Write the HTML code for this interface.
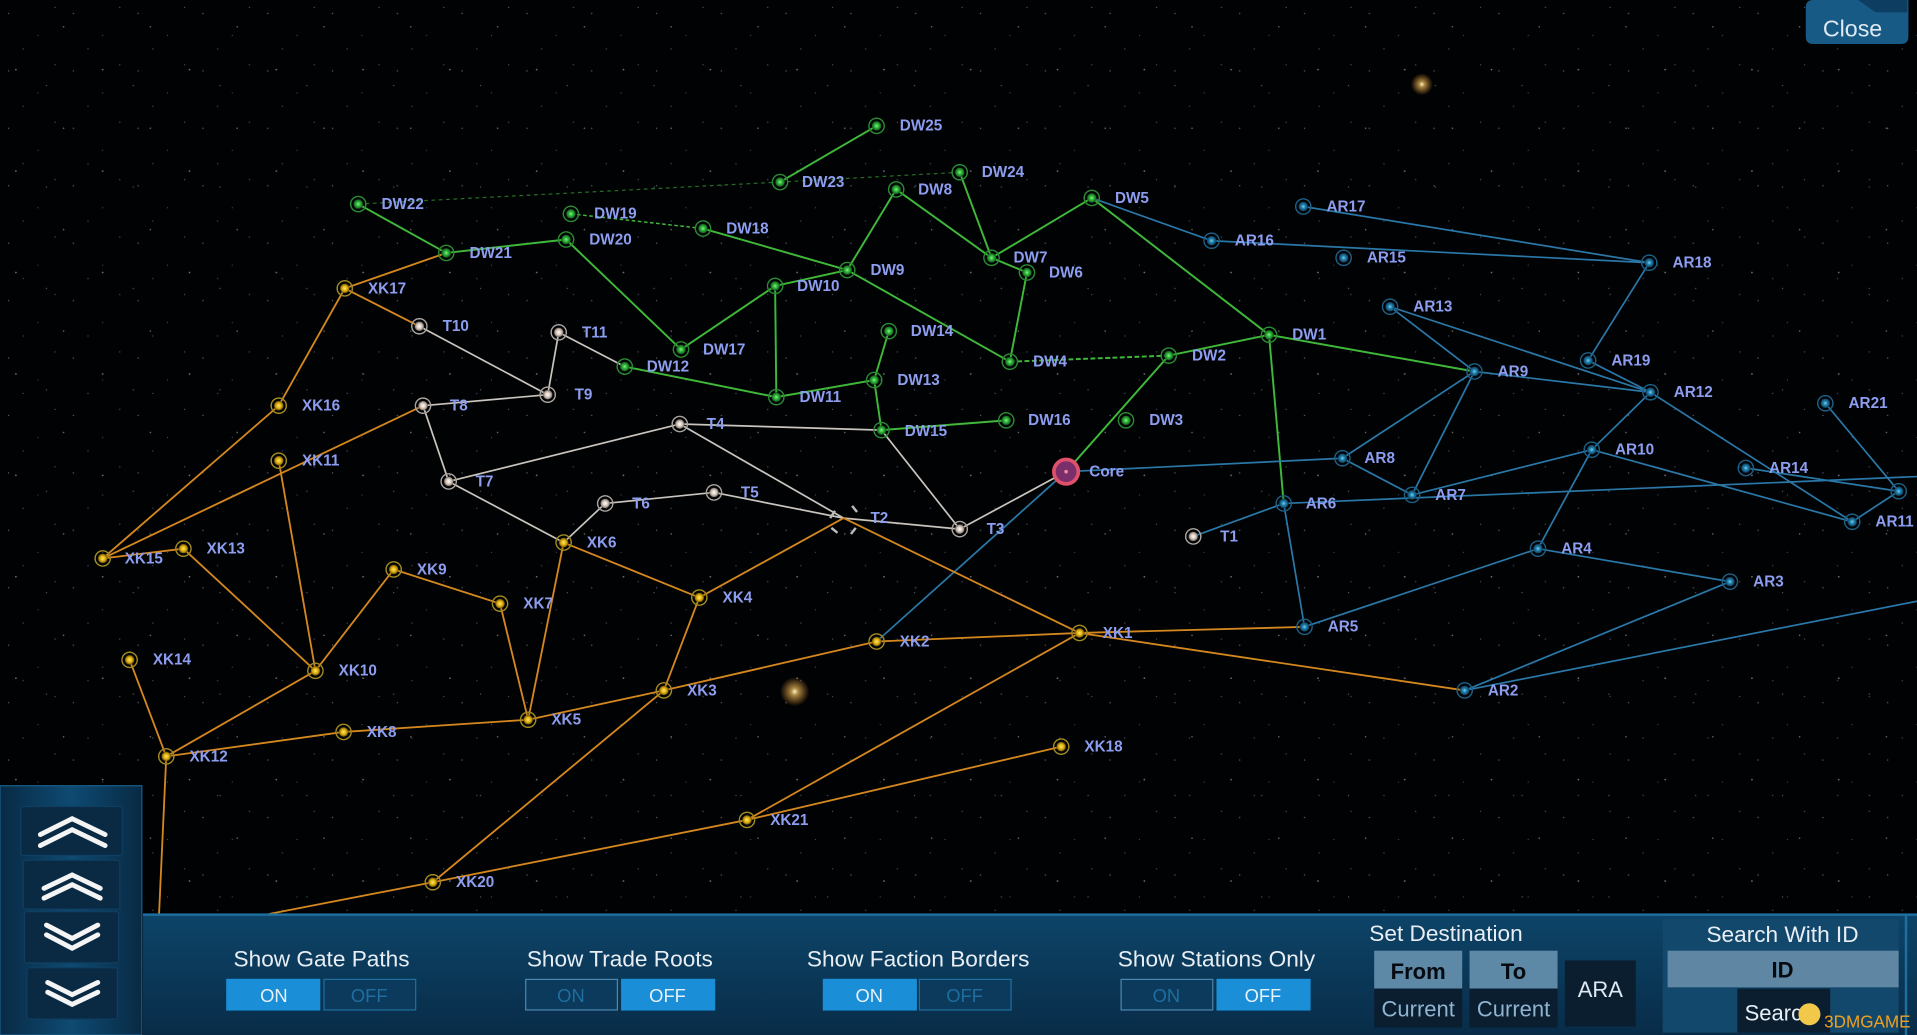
<!DOCTYPE html>
<html><head><meta charset="utf-8"><style>
html,body{margin:0;padding:0;background:#000;overflow:hidden}
svg{display:block}
text{font-family:"Liberation Sans",sans-serif}
.l{fill:#8d9ef0;font-weight:bold;font-size:12.5px}
.p{fill:#e8eef4;font-size:18.5px}
</style></head><body>
<svg width="1917" height="1035" viewBox="0 0 1568 847" preserveAspectRatio="none" xmlns="http://www.w3.org/2000/svg">
<defs>
<radialGradient id="glow"><stop offset="0" stop-color="#fff8d0"/><stop offset=".25" stop-color="#f3c060" stop-opacity=".7"/><stop offset="1" stop-color="#f0a030" stop-opacity="0"/></radialGradient>
<linearGradient id="pan" x1="0" y1="0" x2="0" y2="1"><stop offset="0" stop-color="#0d4468"/><stop offset="1" stop-color="#082c48"/></linearGradient>
<linearGradient id="lp" x1="0" y1="0" x2="1" y2="0"><stop offset="0" stop-color="#082a44"/><stop offset=".5" stop-color="#0e4a72"/><stop offset="1" stop-color="#082a44"/></linearGradient>
<radialGradient id="ng"><stop offset="0" stop-color="#8af08a"/><stop offset=".25" stop-color="#2db83a"/><stop offset=".5" stop-color="#1a6a22"/><stop offset=".62" stop-color="#000" stop-opacity="0"/><stop offset=".78" stop-color="#000" stop-opacity="0"/><stop offset=".82" stop-color="#2a8a33"/><stop offset=".95" stop-color="#2a8a33"/><stop offset="1" stop-color="#2a8a33" stop-opacity="0"/></radialGradient>
<radialGradient id="nb"><stop offset="0" stop-color="#7ad0f0"/><stop offset=".25" stop-color="#1f7fae"/><stop offset=".5" stop-color="#124a6a"/><stop offset=".62" stop-color="#000" stop-opacity="0"/><stop offset=".78" stop-color="#000" stop-opacity="0"/><stop offset=".82" stop-color="#1c5e84"/><stop offset=".95" stop-color="#1c5e84"/><stop offset="1" stop-color="#1c5e84" stop-opacity="0"/></radialGradient>
<radialGradient id="nw"><stop offset="0" stop-color="#fff"/><stop offset=".3" stop-color="#d8c8bc"/><stop offset=".5" stop-color="#8a8078"/><stop offset=".62" stop-color="#000" stop-opacity="0"/><stop offset=".78" stop-color="#000" stop-opacity="0"/><stop offset=".82" stop-color="#a8a29c"/><stop offset=".95" stop-color="#a8a29c"/><stop offset="1" stop-color="#a8a29c" stop-opacity="0"/></radialGradient>
<radialGradient id="no"><stop offset="0" stop-color="#ffe860"/><stop offset=".3" stop-color="#e0b010"/><stop offset=".5" stop-color="#8a6a08"/><stop offset=".62" stop-color="#000" stop-opacity="0"/><stop offset=".78" stop-color="#000" stop-opacity="0"/><stop offset=".82" stop-color="#a08a20"/><stop offset=".95" stop-color="#a08a20"/><stop offset="1" stop-color="#a08a20" stop-opacity="0"/></radialGradient>
<pattern id="s1" width="53" height="47" patternUnits="userSpaceOnUse"><circle cx="7" cy="11" r=".6" fill="#8890a8"/><circle cx="31" cy="29" r=".5" fill="#707890"/><circle cx="45" cy="6" r=".5" fill="#9098b0"/><circle cx="19" cy="40" r=".6" fill="#6870a0"/></pattern>
<pattern id="s2" width="71" height="83" patternUnits="userSpaceOnUse"><circle cx="13" cy="57" r=".7" fill="#a0a8c0"/><circle cx="52" cy="22" r=".6" fill="#b0a890"/><circle cx="38" cy="70" r=".5" fill="#8088a0"/></pattern>
</defs>
<rect width="1568" height="847" fill="#010204"/>
<rect width="1568" height="847" fill="url(#s1)" opacity=".6"/>
<rect width="1568" height="847" fill="url(#s2)" opacity=".7"/>
<circle cx="1163" cy="69" r="9" fill="url(#glow)"/>
<circle cx="650" cy="566" r="12" fill="url(#glow)"/>
<g stroke="#3fb83a" stroke-width="1.6" fill="none">
<line x1="293" y1="167" x2="638" y2="149" stroke-dasharray="3 3" stroke-width="1" opacity=".6"/>
<line x1="638" y1="149" x2="785" y2="141" stroke-dasharray="3 3" stroke-width="1" opacity=".6"/>
<line x1="467" y1="175" x2="575" y2="187" stroke-dasharray="3 2" stroke-width="1.2"/>
<line x1="638" y1="149" x2="717" y2="103"/>
<line x1="575" y1="187" x2="693" y2="221"/>
<line x1="693" y1="221" x2="733" y2="155"/>
<line x1="733" y1="155" x2="811" y2="211"/>
<line x1="811" y1="211" x2="840" y2="223"/>
<line x1="785" y1="141" x2="811" y2="211"/>
<line x1="811" y1="211" x2="893" y2="162"/>
<line x1="693" y1="221" x2="634" y2="234"/>
<line x1="634" y1="234" x2="557" y2="286"/>
<line x1="557" y1="286" x2="463" y2="196"/>
<line x1="634" y1="234" x2="635" y2="325"/>
<line x1="511" y1="300" x2="635" y2="325"/>
<line x1="635" y1="325" x2="715" y2="311"/>
<line x1="715" y1="311" x2="727" y2="271"/>
<line x1="715" y1="311" x2="721" y2="352"/>
<line x1="721" y1="352" x2="823" y2="344"/>
<line x1="693" y1="221" x2="826" y2="296"/>
<line x1="840" y1="223" x2="826" y2="296"/>
<line x1="826" y1="296" x2="956" y2="291" stroke-dasharray="4 2"/>
<line x1="956" y1="291" x2="1038" y2="274"/>
<line x1="893" y1="162" x2="1038" y2="274"/>
<line x1="956" y1="291" x2="872" y2="386"/>
<line x1="1038" y1="274" x2="1206" y2="304"/>
<line x1="1038" y1="274" x2="1050" y2="412"/>
<line x1="463" y1="196" x2="365" y2="207"/>
<line x1="365" y1="207" x2="293" y2="167"/>
</g>
<g stroke="#2a78a8" stroke-width="1.4" fill="none">
<line x1="893" y1="162" x2="991" y2="197"/>
<line x1="1066" y1="169" x2="1349" y2="215"/>
<line x1="991" y1="197" x2="1349" y2="215"/>
<line x1="1349" y1="215" x2="1299" y2="295"/>
<line x1="1137" y1="251" x2="1206" y2="304"/>
<line x1="1137" y1="251" x2="1350" y2="321"/>
<line x1="1206" y1="304" x2="1350" y2="321"/>
<line x1="1299" y1="295" x2="1350" y2="321"/>
<line x1="1350" y1="321" x2="1515" y2="427"/>
<line x1="1206" y1="304" x2="1098" y2="375"/>
<line x1="1206" y1="304" x2="1155" y2="405"/>
<line x1="1098" y1="375" x2="1155" y2="405"/>
<line x1="872" y1="386" x2="1098" y2="375"/>
<line x1="1155" y1="405" x2="1302" y2="368"/>
<line x1="1302" y1="368" x2="1350" y2="321"/>
<line x1="1302" y1="368" x2="1258" y2="449"/>
<line x1="1302" y1="368" x2="1515" y2="427"/>
<line x1="1258" y1="449" x2="1415" y2="476"/>
<line x1="1493" y1="330" x2="1553" y2="402"/>
<line x1="1553" y1="402" x2="1515" y2="427"/>
<line x1="1428" y1="383" x2="1553" y2="402"/>
<line x1="1050" y1="412" x2="976" y2="439"/>
<line x1="1050" y1="412" x2="1568" y2="390"/>
<line x1="1050" y1="412" x2="1067" y2="513"/>
<line x1="1067" y1="513" x2="1258" y2="449"/>
<line x1="1198" y1="565" x2="1415" y2="476"/>
<line x1="1198" y1="565" x2="1568" y2="492"/>
<line x1="872" y1="386" x2="717" y2="525"/>
</g>
<g stroke="#c9c4bd" stroke-width="1.4" fill="none">
<line x1="343" y1="267" x2="448" y2="323"/>
<line x1="457" y1="272" x2="448" y2="323"/>
<line x1="457" y1="272" x2="511" y2="300"/>
<line x1="346" y1="332" x2="448" y2="323"/>
<line x1="346" y1="332" x2="367" y2="394"/>
<line x1="367" y1="394" x2="556" y2="347"/>
<line x1="556" y1="347" x2="721" y2="352"/>
<line x1="556" y1="347" x2="690" y2="424"/>
<line x1="367" y1="394" x2="461" y2="444"/>
<line x1="461" y1="444" x2="495" y2="412"/>
<line x1="495" y1="412" x2="584" y2="403"/>
<line x1="584" y1="403" x2="690" y2="424"/>
<line x1="690" y1="424" x2="785" y2="433"/>
<line x1="785" y1="433" x2="721" y2="352"/>
<line x1="785" y1="433" x2="872" y2="386"/>
</g>
<g stroke="#d4871e" stroke-width="1.5" fill="none">
<line x1="282" y1="236" x2="365" y2="207"/>
<line x1="282" y1="236" x2="228" y2="332"/>
<line x1="282" y1="236" x2="343" y2="267"/>
<line x1="228" y1="332" x2="84" y2="457"/>
<line x1="84" y1="457" x2="346" y2="332"/>
<line x1="84" y1="457" x2="150" y2="449"/>
<line x1="228" y1="377" x2="258" y2="549"/>
<line x1="150" y1="449" x2="258" y2="549"/>
<line x1="258" y1="549" x2="322" y2="466"/>
<line x1="322" y1="466" x2="409" y2="494"/>
<line x1="409" y1="494" x2="432" y2="589"/>
<line x1="461" y1="444" x2="432" y2="589"/>
<line x1="461" y1="444" x2="572" y2="489"/>
<line x1="572" y1="489" x2="690" y2="424"/>
<line x1="572" y1="489" x2="543" y2="565"/>
<line x1="543" y1="565" x2="432" y2="589"/>
<line x1="432" y1="589" x2="281" y2="599"/>
<line x1="281" y1="599" x2="136" y2="619"/>
<line x1="136" y1="619" x2="106" y2="540"/>
<line x1="136" y1="619" x2="258" y2="549"/>
<line x1="136" y1="619" x2="130" y2="750"/>
<line x1="543" y1="565" x2="717" y2="525"/>
<line x1="717" y1="525" x2="883" y2="518"/>
<line x1="543" y1="565" x2="354" y2="722"/>
<line x1="354" y1="722" x2="220" y2="748"/>
<line x1="354" y1="722" x2="611" y2="671"/>
<line x1="611" y1="671" x2="883" y2="518"/>
<line x1="611" y1="671" x2="868" y2="611"/>
<line x1="883" y1="518" x2="690" y2="424"/>
<line x1="883" y1="518" x2="1067" y2="513"/>
<line x1="883" y1="518" x2="1198" y2="565"/>
</g>
<path d="M683 418 l-4 6 M697 414 l4 5 M680 432 l5 4 M700 432 l-4 5" stroke="#bbb" stroke-width="2"/>
<g>
<g fill="url(#ng)">
<circle cx="717" cy="103" r="7"/><circle cx="638" cy="149" r="7"/><circle cx="785" cy="141" r="7"/><circle cx="293" cy="167" r="7"/><circle cx="733" cy="155" r="7"/><circle cx="467" cy="175" r="7"/><circle cx="575" cy="187" r="7"/><circle cx="463" cy="196" r="7"/><circle cx="365" cy="207" r="7"/><circle cx="811" cy="211" r="7"/><circle cx="840" cy="223" r="7"/><circle cx="893" cy="162" r="7"/><circle cx="693" cy="221" r="7"/><circle cx="634" cy="234" r="7"/><circle cx="727" cy="271" r="7"/><circle cx="557" cy="286" r="7"/><circle cx="511" cy="300" r="7"/><circle cx="826" cy="296" r="7"/><circle cx="956" cy="291" r="7"/><circle cx="1038" cy="274" r="7"/><circle cx="715" cy="311" r="7"/><circle cx="635" cy="325" r="7"/><circle cx="823" cy="344" r="7"/><circle cx="921" cy="344" r="7"/><circle cx="721" cy="352" r="7"/>
</g>
<g fill="url(#nb)">
<circle cx="1066" cy="169" r="7"/><circle cx="991" cy="197" r="7"/><circle cx="1099" cy="211" r="7"/><circle cx="1349" cy="215" r="7"/><circle cx="1137" cy="251" r="7"/><circle cx="1299" cy="295" r="7"/><circle cx="1206" cy="304" r="7"/><circle cx="1350" cy="321" r="7"/><circle cx="1493" cy="330" r="7"/><circle cx="1302" cy="368" r="7"/><circle cx="1098" cy="375" r="7"/><circle cx="1428" cy="383" r="7"/><circle cx="1155" cy="405" r="7"/><circle cx="1050" cy="412" r="7"/><circle cx="1515" cy="427" r="7"/><circle cx="1258" cy="449" r="7"/><circle cx="1415" cy="476" r="7"/><circle cx="1067" cy="513" r="7"/><circle cx="1198" cy="565" r="7"/><circle cx="1553" cy="402" r="7"/>
</g>
<g fill="url(#nw)">
<circle cx="343" cy="267" r="7"/><circle cx="457" cy="272" r="7"/><circle cx="448" cy="323" r="7"/><circle cx="346" cy="332" r="7"/><circle cx="556" cy="347" r="7"/><circle cx="367" cy="394" r="7"/><circle cx="495" cy="412" r="7"/><circle cx="584" cy="403" r="7"/><circle cx="785" cy="433" r="7"/><circle cx="976" cy="439" r="7"/>
</g>
<g fill="url(#no)">
<circle cx="282" cy="236" r="7"/><circle cx="228" cy="332" r="7"/><circle cx="228" cy="377" r="7"/><circle cx="84" cy="457" r="7"/><circle cx="150" cy="449" r="7"/><circle cx="322" cy="466" r="7"/><circle cx="461" cy="444" r="7"/><circle cx="409" cy="494" r="7"/><circle cx="572" cy="489" r="7"/><circle cx="106" cy="540" r="7"/><circle cx="258" cy="549" r="7"/><circle cx="717" cy="525" r="7"/><circle cx="883" cy="518" r="7"/><circle cx="543" cy="565" r="7"/><circle cx="432" cy="589" r="7"/><circle cx="281" cy="599" r="7"/><circle cx="136" cy="619" r="7"/><circle cx="868" cy="611" r="7"/><circle cx="611" cy="671" r="7"/><circle cx="354" cy="722" r="7"/>
</g>
</g>
<circle cx="872" cy="386" r="10" fill="#7a2e6a" stroke="#e0506a" stroke-width="3"/>
<circle cx="872" cy="386" r="1.5" fill="#f08aa0"/>
<g class="l">
<text x="736" y="107">DW25</text><text x="656" y="153">DW23</text><text x="803" y="145">DW24</text><text x="312" y="171">DW22</text><text x="751" y="159">DW8</text><text x="486" y="179">DW19</text><text x="594" y="191">DW18</text><text x="482" y="200">DW20</text><text x="384" y="211">DW21</text><text x="829" y="215">DW7</text><text x="858" y="227">DW6</text><text x="912" y="166">DW5</text><text x="712" y="225">DW9</text><text x="652" y="238">DW10</text><text x="745" y="275">DW14</text><text x="575" y="290">DW17</text><text x="529" y="304">DW12</text><text x="845" y="300">DW4</text><text x="975" y="295">DW2</text><text x="1057" y="278">DW1</text><text x="734" y="315">DW13</text><text x="654" y="329">DW11</text><text x="841" y="348">DW16</text><text x="940" y="348">DW3</text><text x="740" y="357">DW15</text>
<text x="1085" y="173">AR17</text><text x="1010" y="201">AR16</text><text x="1118" y="215">AR15</text><text x="1368" y="219">AR18</text><text x="1156" y="255">AR13</text><text x="1318" y="299">AR19</text><text x="1225" y="308">AR9</text><text x="1369" y="325">AR12</text><text x="1512" y="334">AR21</text><text x="1321" y="372">AR10</text><text x="1116" y="379">AR8</text><text x="1447" y="387">AR14</text><text x="1174" y="409">AR7</text><text x="1068" y="416">AR6</text><text x="1534" y="431">AR11</text><text x="1277" y="453">AR4</text><text x="1434" y="480">AR3</text><text x="1086" y="517">AR5</text><text x="1217" y="569">AR2</text>
<text x="362" y="271">T10</text><text x="476" y="276">T11</text><text x="470" y="327">T9</text><text x="368" y="336">T8</text><text x="578" y="351">T4</text><text x="389" y="398">T7</text><text x="517" y="416">T6</text><text x="606" y="407">T5</text><text x="712" y="428">T2</text><text x="807" y="437">T3</text><text x="998" y="443">T1</text><text x="891" y="390">Core</text>
<text x="301" y="240">XK17</text><text x="247" y="336">XK16</text><text x="247" y="381">XK11</text><text x="102" y="461">XK15</text><text x="169" y="453">XK13</text><text x="341" y="470">XK9</text><text x="480" y="448">XK6</text><text x="428" y="498">XK7</text><text x="591" y="493">XK4</text><text x="125" y="544">XK14</text><text x="277" y="553">XK10</text><text x="736" y="529">XK2</text><text x="902" y="522">XK1</text><text x="562" y="569">XK3</text><text x="451" y="593">XK5</text><text x="300" y="603">XK8</text><text x="155" y="623">XK12</text><text x="887" y="615">XK18</text><text x="630" y="675">XK21</text><text x="373" y="726">XK20</text>
</g>
<!-- Close -->
<path d="M1477 6 q0-6 6-6 h78 v30 q0 6-6 6 h-72 q-6 0-6-6z" fill="#175a86"/>
<path d="M1520 0 l14 10 h26 v-10z" fill="#0d3d60"/>
<text x="1491" y="30" fill="#dfe9f2" font-size="19">Close</text>
<!-- left panel -->
<rect x="0" y="643" width="116" height="204" fill="url(#lp)" stroke="#1a5e8a"/>
<g fill="#0a2a44" stroke="#0f3e60">
<rect x="17" y="660" width="83" height="40" rx="2"/><rect x="19" y="704" width="79" height="40" rx="2"/><rect x="20" y="746" width="77" height="42" rx="2"/><rect x="22" y="792" width="74" height="42" rx="2"/>
</g>
<g stroke="#f4f4f4" stroke-width="4" fill="none" stroke-linecap="round">
<path d="M33 683 L59 670 L86 683 M33 692 L59 679 L86 692"/>
<path d="M36 727 L59 716 L82 727 M36 735 L59 724 L82 735"/>
<path d="M38 757 L59 768 L80 757 M38 765 L59 776 L80 765"/>
<path d="M39 804 L59 814 L80 804 M39 812 L59 822 L80 812"/>
</g>
<!-- bottom panel -->
<rect x="117" y="748" width="1451" height="99" fill="url(#pan)"/>
<line x1="117" y1="748.5" x2="1568" y2="748.5" stroke="#1e6e9e" stroke-width="2"/>
<line x1="1559" y1="748" x2="1559" y2="847" stroke="#1e6e9e" stroke-width="2"/>
<text class="p" x="263" y="791" text-anchor="middle">Show Gate Paths</text>
<text class="p" x="507" y="791" text-anchor="middle">Show Trade Roots</text>
<text class="p" x="751" y="791" text-anchor="middle">Show Faction Borders</text>
<text class="p" x="995" y="791" text-anchor="middle">Show Stations Only</text>
<g font-size="15" text-anchor="middle">
<rect x="185" y="801" width="77" height="26" fill="#1a8ed6"/><text x="224" y="820" fill="#e8f2fa">ON</text>
<rect x="265" y="801.5" width="75" height="25" fill="#0b3a5c" stroke="#1f6e9e"/><text x="302" y="820" fill="#1e6ea0">OFF</text>
<rect x="430" y="801.5" width="75" height="25" fill="#0b3a5c" stroke="#4a86ae"/><text x="467" y="820" fill="#1e6ea0">ON</text>
<rect x="508" y="801" width="77" height="26" fill="#1a8ed6"/><text x="546" y="820" fill="#e8f2fa">OFF</text>
<rect x="673" y="801" width="77" height="26" fill="#1a8ed6"/><text x="711" y="820" fill="#e8f2fa">ON</text>
<rect x="752" y="801.5" width="75" height="25" fill="#0b3a5c" stroke="#1f6e9e"/><text x="789" y="820" fill="#1e6ea0">OFF</text>
<rect x="917" y="801.5" width="75" height="25" fill="#0b3a5c" stroke="#4a86ae"/><text x="954" y="820" fill="#1e6ea0">ON</text>
<rect x="995" y="801" width="77" height="26" fill="#1a8ed6"/><text x="1033" y="820" fill="#e8f2fa">OFF</text>
</g>
<text class="p" x="1120" y="770">Set Destination</text>
<rect x="1124" y="778" width="72" height="31" fill="#5d88a6"/><text x="1160" y="801" text-anchor="middle" font-size="18" font-weight="bold" fill="#050a10">From</text>
<rect x="1124" y="809" width="72" height="32" fill="#0a1e30"/><text x="1160" y="832" text-anchor="middle" font-size="18" fill="#8fb4d0">Current</text>
<rect x="1202" y="778" width="72" height="31" fill="#5d88a6"/><text x="1238" y="801" text-anchor="middle" font-size="18" font-weight="bold" fill="#050a10">To</text>
<rect x="1202" y="809" width="72" height="32" fill="#0a1e30"/><text x="1238" y="832" text-anchor="middle" font-size="18" fill="#8fb4d0">Current</text>
<rect x="1280" y="786" width="58" height="54" fill="#0a1e30"/><text x="1309" y="816" text-anchor="middle" font-size="18" fill="#dfe9f2">ARA</text>
<rect x="1360" y="752" width="193" height="93" fill="#12486c"/>
<text class="p" x="1458" y="771" text-anchor="middle">Search With ID</text>
<rect x="1364" y="778" width="189" height="30" fill="#5f86a2"/><text x="1458" y="800" text-anchor="middle" font-size="18" font-weight="bold" fill="#050a10">ID</text>
<rect x="1421" y="809" width="76" height="36" fill="#0a1e30"/><text x="1427" y="835" font-size="18" fill="#e8eef4">Search</text>
<circle cx="1480" cy="830" r="9" fill="#f2c84a"/>
<text x="1492" y="841" font-size="14" fill="#f0a020">3DMGAME</text>
</svg>
</body></html>
